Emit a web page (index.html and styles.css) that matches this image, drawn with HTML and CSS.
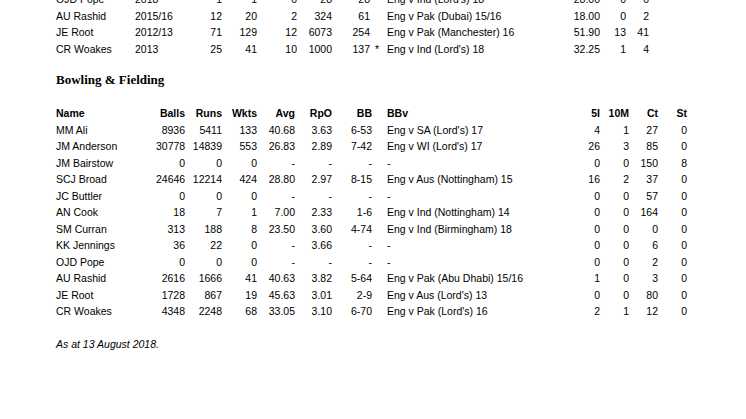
FILE: index.html
```html
<!DOCTYPE html>
<html>
<head>
<meta charset="utf-8">
<link rel="stylesheet" href="styles.css">
</head>
<body>
<div class="page">
  <table class="stats batting">
    <colgroup>
      <col class="b-name"><col class="b-span"><col class="b-m"><col class="b-i"><col class="b-no"><col class="b-runs"><col class="b-hs"><col class="b-star"><col class="b-hsv"><col class="b-avg"><col class="b-100"><col class="b-50">
    </colgroup>
    <tbody>
      <tr><td>OJD Pope</td><td>2018</td><td class="n">1</td><td class="n">1</td><td class="n">0</td><td class="n">28</td><td class="n">28</td><td class="star"></td><td>Eng v Ind (Lord's) 18</td><td class="n">28.00</td><td class="n">0</td><td class="n">0</td></tr>
      <tr><td>AU Rashid</td><td>2015/16</td><td class="n">12</td><td class="n">20</td><td class="n">2</td><td class="n">324</td><td class="n">61</td><td class="star"></td><td>Eng v Pak (Dubai) 15/16</td><td class="n">18.00</td><td class="n">0</td><td class="n">2</td></tr>
      <tr><td>JE Root</td><td>2012/13</td><td class="n">71</td><td class="n">129</td><td class="n">12</td><td class="n">6073</td><td class="n">254</td><td class="star"></td><td>Eng v Pak (Manchester) 16</td><td class="n">51.90</td><td class="n">13</td><td class="n">41</td></tr>
      <tr><td>CR Woakes</td><td>2013</td><td class="n">25</td><td class="n">41</td><td class="n">10</td><td class="n">1000</td><td class="n">137</td><td class="star">*</td><td>Eng v Ind (Lord's) 18</td><td class="n">32.25</td><td class="n">1</td><td class="n">4</td></tr>
    </tbody>
  </table>

  <h2 class="section-title">Bowling &amp; Fielding</h2>

  <table class="stats bowling">
    <colgroup>
      <col class="w-name"><col class="w-balls"><col class="w-runs"><col class="w-wkts"><col class="w-avg"><col class="w-rpo"><col class="w-bb"><col class="w-bbv"><col class="w-5i"><col class="w-10m"><col class="w-ct"><col class="w-st">
    </colgroup>
    <thead>
      <tr><th>Name</th><th class="n">Balls</th><th class="n">Runs</th><th class="n">Wkts</th><th class="n">Avg</th><th class="n">RpO</th><th class="n">BB</th><th class="bbv">BBv</th><th class="n">5I</th><th class="n">10M</th><th class="n">Ct</th><th class="n">St</th></tr>
    </thead>
    <tbody>
      <tr><td>MM Ali</td><td class="n">8936</td><td class="n">5411</td><td class="n">133</td><td class="n">40.68</td><td class="n">3.63</td><td class="n">6-53</td><td class="bbv">Eng v SA (Lord's) 17</td><td class="n">4</td><td class="n">1</td><td class="n">27</td><td class="n">0</td></tr>
      <tr><td>JM Anderson</td><td class="n">30778</td><td class="n">14839</td><td class="n">553</td><td class="n">26.83</td><td class="n">2.89</td><td class="n">7-42</td><td class="bbv">Eng v WI (Lord's) 17</td><td class="n">26</td><td class="n">3</td><td class="n">85</td><td class="n">0</td></tr>
      <tr><td>JM Bairstow</td><td class="n">0</td><td class="n">0</td><td class="n">0</td><td class="n">-</td><td class="n">-</td><td class="n">-</td><td class="bbv">-</td><td class="n">0</td><td class="n">0</td><td class="n">150</td><td class="n">8</td></tr>
      <tr><td>SCJ Broad</td><td class="n">24646</td><td class="n">12214</td><td class="n">424</td><td class="n">28.80</td><td class="n">2.97</td><td class="n">8-15</td><td class="bbv">Eng v Aus (Nottingham) 15</td><td class="n">16</td><td class="n">2</td><td class="n">37</td><td class="n">0</td></tr>
      <tr><td>JC Buttler</td><td class="n">0</td><td class="n">0</td><td class="n">0</td><td class="n">-</td><td class="n">-</td><td class="n">-</td><td class="bbv">-</td><td class="n">0</td><td class="n">0</td><td class="n">57</td><td class="n">0</td></tr>
      <tr><td>AN Cook</td><td class="n">18</td><td class="n">7</td><td class="n">1</td><td class="n">7.00</td><td class="n">2.33</td><td class="n">1-6</td><td class="bbv">Eng v Ind (Nottingham) 14</td><td class="n">0</td><td class="n">0</td><td class="n">164</td><td class="n">0</td></tr>
      <tr><td>SM Curran</td><td class="n">313</td><td class="n">188</td><td class="n">8</td><td class="n">23.50</td><td class="n">3.60</td><td class="n">4-74</td><td class="bbv">Eng v Ind (Birmingham) 18</td><td class="n">0</td><td class="n">0</td><td class="n">0</td><td class="n">0</td></tr>
      <tr><td>KK Jennings</td><td class="n">36</td><td class="n">22</td><td class="n">0</td><td class="n">-</td><td class="n">3.66</td><td class="n">-</td><td class="bbv">-</td><td class="n">0</td><td class="n">0</td><td class="n">6</td><td class="n">0</td></tr>
      <tr><td>OJD Pope</td><td class="n">0</td><td class="n">0</td><td class="n">0</td><td class="n">-</td><td class="n">-</td><td class="n">-</td><td class="bbv">-</td><td class="n">0</td><td class="n">0</td><td class="n">2</td><td class="n">0</td></tr>
      <tr><td>AU Rashid</td><td class="n">2616</td><td class="n">1666</td><td class="n">41</td><td class="n">40.63</td><td class="n">3.82</td><td class="n">5-64</td><td class="bbv">Eng v Pak (Abu Dhabi) 15/16</td><td class="n">1</td><td class="n">0</td><td class="n">3</td><td class="n">0</td></tr>
      <tr><td>JE Root</td><td class="n">1728</td><td class="n">867</td><td class="n">19</td><td class="n">45.63</td><td class="n">3.01</td><td class="n">2-9</td><td class="bbv">Eng v Aus (Lord's) 13</td><td class="n">0</td><td class="n">0</td><td class="n">80</td><td class="n">0</td></tr>
      <tr><td>CR Woakes</td><td class="n">4348</td><td class="n">2248</td><td class="n">68</td><td class="n">33.05</td><td class="n">3.10</td><td class="n">6-70</td><td class="bbv">Eng v Pak (Lord's) 16</td><td class="n">2</td><td class="n">1</td><td class="n">12</td><td class="n">0</td></tr>
    </tbody>
  </table>

  <p class="note">As at 13 August 2018.</p>
</div>
</body>
</html>
```

FILE: styles.css
```css
html, body {
  margin: 0;
  padding: 0;
  background: #ffffff;
}

body {
  width: 746px;
  height: 419px;
  overflow: hidden;
  color: #000;
  font-family: "Liberation Sans", Arial, sans-serif;
  font-size: 10.5px;
}

.page {
  padding-left: 56px;
}

.stats {
  border-collapse: collapse;
  border-spacing: 0;
  table-layout: fixed;
}

.stats td,
.stats th {
  padding: 0;
  height: 16.5px;
  line-height: 16.5px;
  white-space: nowrap;
  text-align: left;
  vertical-align: middle;
  font-weight: normal;
}

.stats th {
  font-weight: bold;
}

.stats .n {
  text-align: right;
}

/* batting */
.batting {
  width: 593px;
  margin-top: -9px;
}
.b-name { width: 79px; }
.b-span { width: 55px; }
.b-m { width: 32px; }
.b-i { width: 35px; }
.b-no { width: 40px; }
.b-runs { width: 35px; }
.b-hs { width: 38px; }
.b-star { width: 17px; }
.b-hsv { width: 173px; }
.b-avg { width: 40px; }
.b-100 { width: 26px; }
.b-50 { width: 23px; }

.batting .star {
  padding-left: 5px;
}

.section-title {
  margin: 15px 0 0;
  height: 16px;
  line-height: 16px;
  font-family: "Liberation Serif", "Times New Roman", serif;
  font-size: 13px;
  font-weight: bold;
}

/* bowling */
.bowling {
  width: 631px;
  margin-top: 17px;
}
.w-name { width: 100px; }
.w-balls { width: 29px; }
.w-runs { width: 37px; }
.w-wkts { width: 35px; }
.w-avg { width: 38px; }
.w-rpo { width: 37px; }
.w-bb { width: 40px; }
.w-bbv { width: 208px; }
.w-5i { width: 20px; }
.w-10m { width: 29px; }
.w-ct { width: 29px; }
.w-st { width: 29px; }

.bowling .bbv {
  padding-left: 15px;
}

.note {
  margin: 16px 0 0;
  height: 16px;
  line-height: 16px;
  font-style: italic;
  font-size: 10.5px;
}
```
